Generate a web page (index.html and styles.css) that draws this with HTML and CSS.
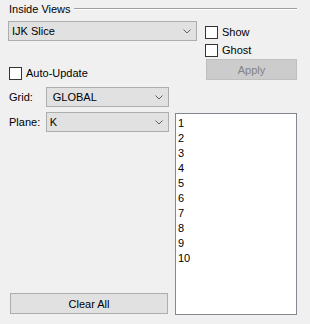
FILE: index.html
```html
<!DOCTYPE html>
<html lang="en">
<head>
    <meta charset="UTF-8">
    <title>Inside Views</title>
    <link rel="stylesheet" href="styles.css">
</head>
<body>
    <div class="panel">
        <div class="group_title">
            <span>Inside Views</span>
            <div class="group_line"></div>
        </div>

        <div class="top_section">
            <div class="top_left">
                <div class="combo combo_wide">
                    <span>IJK Slice</span>
                    <svg class="chevron" width="8" height="5" viewBox="0 0 8 5"><polyline points="0.5,0.5 4,4 7.5,0.5" fill="none" stroke="#606060" stroke-width="1"/></svg>
                </div>
                <label class="check auto_update"><span class="box"></span>Auto-Update</label>
            </div>
            <div class="top_right">
                <label class="check"><span class="box"></span>Show</label>
                <label class="check ghost"><span class="box"></span>Ghost</label>
                <div class="btn btn_disabled">Apply</div>
            </div>
        </div>

        <div class="bottom_section">
            <div class="bottom_left">
                <div class="field_row">
                    <span class="field_label">Grid:</span>
                    <div class="combo combo_field pad_wide">
                        <span>GLOBAL</span>
                        <svg class="chevron" width="8" height="5" viewBox="0 0 8 5"><polyline points="0.5,0.5 4,4 7.5,0.5" fill="none" stroke="#606060" stroke-width="1"/></svg>
                    </div>
                </div>
                <div class="field_row plane_row">
                    <span class="field_label">Plane:</span>
                    <div class="combo combo_field">
                        <span>K</span>
                        <svg class="chevron" width="8" height="5" viewBox="0 0 8 5"><polyline points="0.5,0.5 4,4 7.5,0.5" fill="none" stroke="#606060" stroke-width="1"/></svg>
                    </div>
                </div>
                <div class="btn clear_btn">Clear All</div>
            </div>
            <ul class="list_box">
                <li>1</li>
                <li>2</li>
                <li>3</li>
                <li>4</li>
                <li>5</li>
                <li>6</li>
                <li>7</li>
                <li>8</li>
                <li>9</li>
                <li>10</li>
            </ul>
        </div>
    </div>
</body>
</html>
```

FILE: styles.css
```css
body {
    margin: 0;
    padding: 0;
    background: #f0f0f0;
    font-family: "Liberation Sans", Arial, sans-serif;
    font-size: 11px;
    color: #000;
}

.panel {
    width: 310px;
    height: 324px;
    padding: 2px 0 0 8px;
    box-sizing: border-box;
}

.group_title {
    display: flex;
    align-items: center;
    height: 13px;
    padding-left: 1px;
}

.group_line {
    flex: 1;
    height: 1px;
    margin-left: 3px;
    margin-right: 13px;
    margin-top: 1px;
    background: #a0a0a0;
    border-bottom: 1px solid #ffffff;
}

.top_section {
    display: flex;
    margin-top: 6px;
}

.top_left {
    width: 189px;
    display: flex;
    flex-direction: column;
}

.top_right {
    margin-left: 8px;
    display: flex;
    flex-direction: column;
    padding-top: 5px;
}

.combo {
    display: flex;
    align-items: center;
    justify-content: space-between;
    height: 20px;
    box-sizing: border-box;
    background: #e1e1e1;
    border: 1px solid #adadad;
    padding: 0 5px 0 3px;
}

.combo_wide {
    width: 189px;
}

.chevron {
    display: block;
}

.check {
    display: flex;
    align-items: center;
    height: 13px;
    line-height: 13px;
}

.box {
    width: 13px;
    height: 13px;
    box-sizing: border-box;
    background: #fff;
    border: 1px solid #333333;
    margin-right: 4px;
}

.ghost {
    margin-top: 5px;
}

.auto_update {
    margin-top: 26px;
    margin-left: 1px;
    margin-right: auto;
}

.btn {
    display: flex;
    align-items: center;
    justify-content: center;
    box-sizing: border-box;
    border: 1px solid #adadad;
    background: #e1e1e1;
    height: 21px;
}

.btn_disabled {
    width: 91px;
    margin-top: 2px;
    margin-left: 1px;
    background: #cccccc;
    border-color: #bfbfbf;
    color: #838383;
}

.bottom_section {
    display: flex;
    margin-top: 7px;
}

.bottom_left {
    width: 161px;
    display: flex;
    flex-direction: column;
}

.field_row {
    display: flex;
    align-items: center;
}

.plane_row {
    margin-top: 5px;
}

.field_label {
    width: 37px;
    padding-left: 1px;
}

.combo_field {
    width: 124px;
}

.pad_wide {
    padding-left: 6px;
}

.clear_btn {
    width: 158px;
    margin-left: 2px;
    margin-top: auto;
    margin-bottom: 1px;
}

.list_box {
    list-style: none;
    margin: 26px 0 0 6px;
    padding: 2px 0 0 2px;
    width: 122px;
    height: 202px;
    box-sizing: border-box;
    background: #fff;
    border: 1px solid #828790;
}

.list_box li {
    height: 15px;
    line-height: 15px;
}
```
